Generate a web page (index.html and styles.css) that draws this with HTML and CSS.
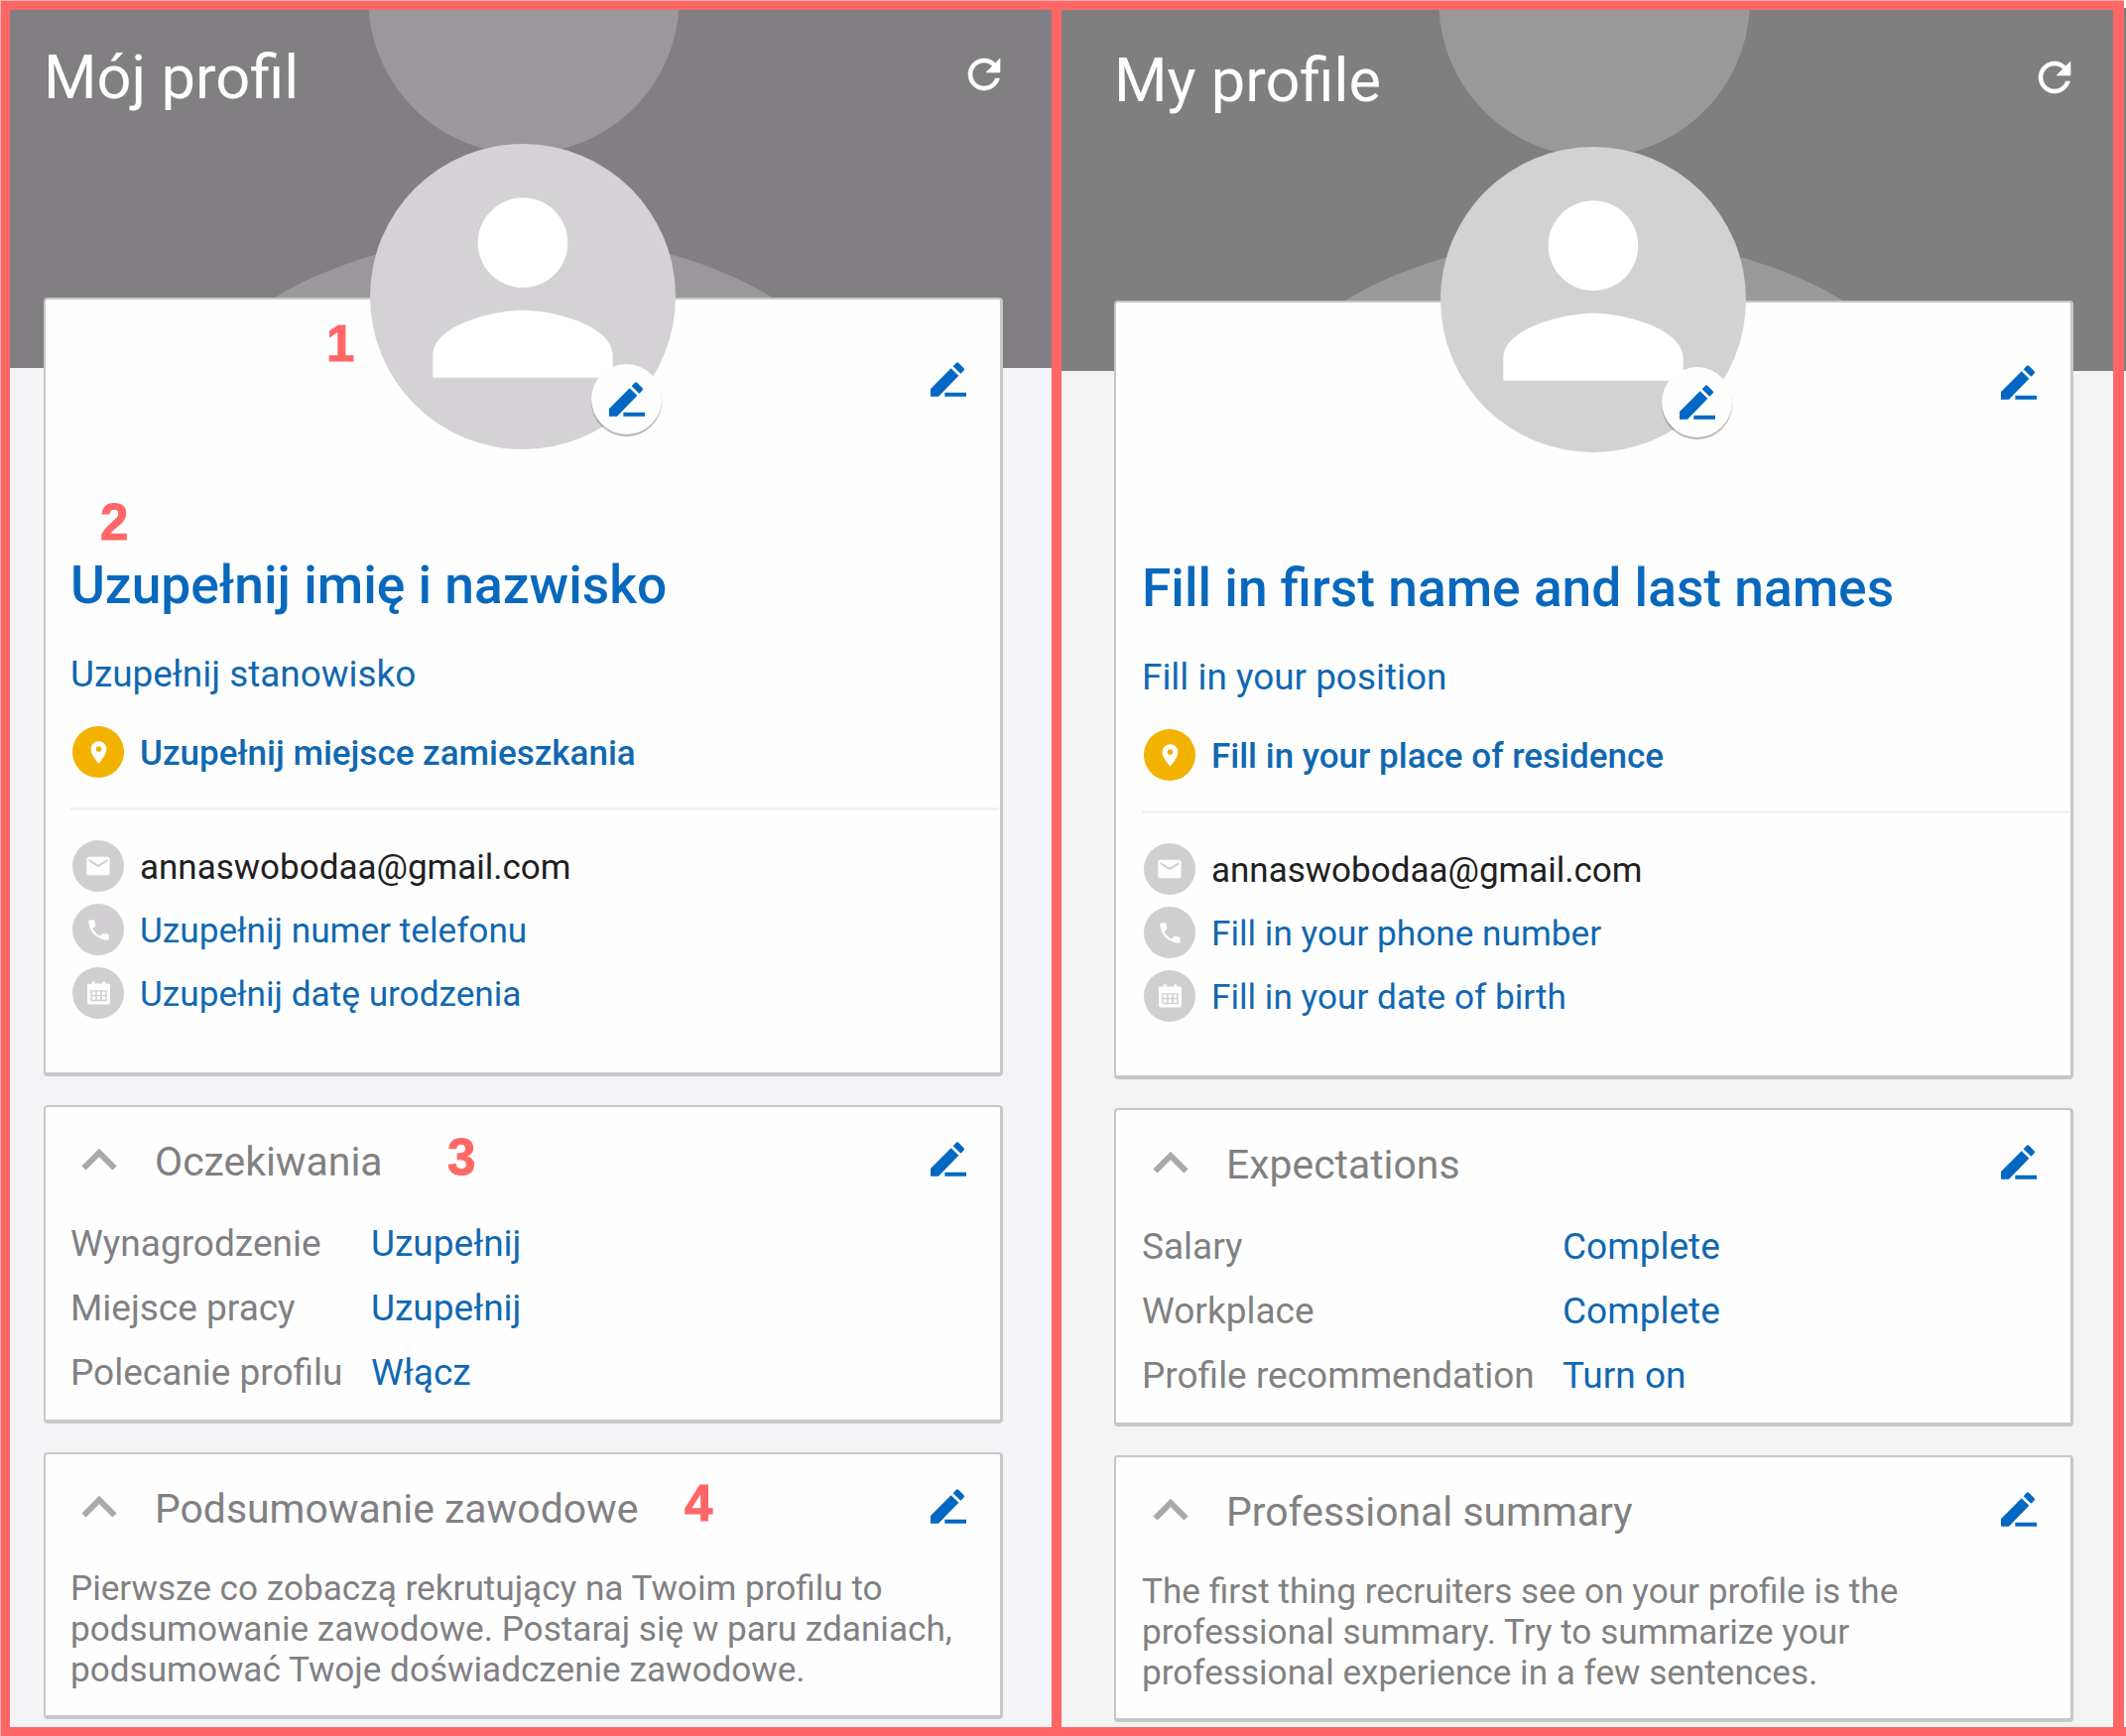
FILE: index.html
```html
<!DOCTYPE html>
<html lang="en">
<head>
<meta charset="utf-8">
<title>Mój profil / My profile</title>
<link rel="stylesheet" href="styles.css">
</head>
<body>
<svg class="defs" aria-hidden="true">
  <symbol id="person" viewBox="0 0 24 24"><path d="M12 12c2.21 0 4-1.79 4-4s-1.79-4-4-4-4 1.79-4 4 1.79 4 4 4zm0 2c-2.67 0-8 1.34-8 4v2h16v-2c0-2.66-5.33-4-8-4z"/></symbol>
  <symbol id="refresh" viewBox="0 0 24 24"><path d="M17.65 6.35C16.2 4.9 14.21 4 12 4c-4.42 0-7.99 3.58-7.99 8s3.57 8 7.99 8c3.73 0 6.84-2.55 7.73-6h-2.08c-.82 2.33-3.04 4-5.65 4-3.31 0-6-2.69-6-6s2.69-6 6-6c1.66 0 3.14.69 4.22 1.78L13 11h7V4l-2.35 2.35z" stroke="currentColor" stroke-width=".3"/></symbol>
  <symbol id="pencil" viewBox="0 0 108 105"><path d="M0 104V81L62 19l23 22-61 63zM68 13l9-10q4-4 8 0l15 15q4 4 0 8l-9 9zM43 92h65v12H43z"/></symbol>
  <symbol id="chevron" viewBox="0 0 36 22"><path d="M2.500 19.500 18 4l15.500 15.500" fill="none" stroke="currentColor" stroke-width="6"/></symbol>
  <symbol id="place" viewBox="0 0 24 24"><path d="M12 2C8.130 2 5 5.130 5 9c0 5.250 7 13 7 13s7-7.750 7-13c0-3.870-3.130-7-7-7zm0 9.500c-1.380 0-2.500-1.120-2.500-2.500s1.120-2.500 2.500-2.500 2.500 1.120 2.500 2.500-1.120 2.500-2.500 2.500z"/></symbol>
  <symbol id="mail" viewBox="0 0 24 24"><path d="M20 4H4c-1.100 0-1.990.9-1.990 2L2 18c0 1.100.9 2 2 2h16c1.100 0 2-.9 2-2V6c0-1.100-.9-2-2-2zm0 4l-8 5-8-5V6l8 5 8-5v2z"/></symbol>
  <symbol id="phone" viewBox="0 0 24 24"><path d="M6.620 10.790c1.440 2.830 3.760 5.140 6.590 6.590l2.200-2.200c.27-.27.67-.36 1.020-.24 1.120.37 2.330.57 3.570.57.55 0 1 .45 1 1V20c0 .55-.45 1-1 1-9.390 0-17-7.610-17-17 0-.55.45-1 1-1h3.500c.55 0 1 .45 1 1 0 1.250.2 2.450.57 3.570.11.35.03.74-.25 1.020l-2.200 2.200z"/></symbol>
  <symbol id="calendar" viewBox="0 0 24 24"><path fill-rule="evenodd" d="M5 0h3v2h8V0h3v2h3q2 0 2 2v18q0 2-2 2H2q-2 0-2-2V4q0-2 2-2h3zM3.500 9v11.500h17V9zM5 10.500h3.500v3.500H5zM10.200 10.500h3.500v3.500h-3.500zM15.500 10.500H19v3.500h-3.500zM5 15.500h3.500V19H5zM10.200 15.500h3.500V19h-3.500zM15.500 15.500H19V19h-3.500z"/></symbol>
</svg>

<main class="board">
  <section class="screen screen-pl" lang="pl">
    <header class="hero">
      <svg class="hero-person"><use href="#person"/></svg>
      <h1 class="hero-title">Mój profil</h1>
      <svg class="refresh"><use href="#refresh"/></svg>
    </header>
    <div class="cards">
      <article class="card profile">
        <div class="profile-top"><svg class="pencil"><use href="#pencil"/></svg></div>
        <div class="avatar">
          <svg class="avatar-person"><use href="#person"/></svg>
          <span class="avatar-edit"><svg class="pencil"><use href="#pencil"/></svg></span>
        </div>
        <h2 class="name">Uzupełnij imię i nazwisko</h2>
        <p class="position">Uzupełnij stanowisko</p>
        <div class="row residence"><span class="dot dot-yellow"><svg class="i-place"><use href="#place"/></svg></span><span class="row-text strong">Uzupełnij miejsce zamieszkania</span></div>
        <hr class="rule">
        <div class="contacts">
          <div class="row"><span class="dot"><svg class="i-mail"><use href="#mail"/></svg></span><span class="row-text dark">annaswobodaa@gmail.com</span></div>
          <div class="row"><span class="dot"><svg class="i-phone"><use href="#phone"/></svg></span><span class="row-text">Uzupełnij numer telefonu</span></div>
          <div class="row"><span class="dot"><svg class="i-cal"><use href="#calendar"/></svg></span><span class="row-text">Uzupełnij datę urodzenia</span></div>
        </div>
      </article>
      <article class="card section">
        <div class="section-head"><svg class="chevron"><use href="#chevron"/></svg><h3 class="section-title">Oczekiwania</h3><svg class="pencil"><use href="#pencil"/></svg></div>
        <dl class="facts">
          <dt>Wynagrodzenie</dt><dd>Uzupełnij</dd>
          <dt>Miejsce pracy</dt><dd>Uzupełnij</dd>
          <dt>Polecanie profilu</dt><dd>Włącz</dd>
        </dl>
      </article>
      <article class="card section">
        <div class="section-head"><svg class="chevron"><use href="#chevron"/></svg><h3 class="section-title">Podsumowanie zawodowe</h3><svg class="pencil"><use href="#pencil"/></svg></div>
        <p class="summary">Pierwsze co zobaczą rekrutujący na Twoim profilu to<br>podsumowanie zawodowe. Postaraj się w paru zdaniach,<br>podsumować Twoje doświadczenie zawodowe.</p>
      </article>
    </div>
    <span class="mark mark-1">1</span>
    <span class="mark mark-2">2</span>
    <span class="mark mark-3">3</span>
    <span class="mark mark-4">4</span>
  </section>

  <section class="screen screen-en">
    <header class="hero">
      <svg class="hero-person"><use href="#person"/></svg>
      <h1 class="hero-title">My profile</h1>
      <svg class="refresh"><use href="#refresh"/></svg>
    </header>
    <div class="cards">
      <article class="card profile">
        <div class="profile-top"><svg class="pencil"><use href="#pencil"/></svg></div>
        <div class="avatar">
          <svg class="avatar-person"><use href="#person"/></svg>
          <span class="avatar-edit"><svg class="pencil"><use href="#pencil"/></svg></span>
        </div>
        <h2 class="name">Fill in first name and last names</h2>
        <p class="position">Fill in your position</p>
        <div class="row residence"><span class="dot dot-yellow"><svg class="i-place"><use href="#place"/></svg></span><span class="row-text strong">Fill in your place of residence</span></div>
        <hr class="rule">
        <div class="contacts">
          <div class="row"><span class="dot"><svg class="i-mail"><use href="#mail"/></svg></span><span class="row-text dark">annaswobodaa@gmail.com</span></div>
          <div class="row"><span class="dot"><svg class="i-phone"><use href="#phone"/></svg></span><span class="row-text">Fill in your phone number</span></div>
          <div class="row"><span class="dot"><svg class="i-cal"><use href="#calendar"/></svg></span><span class="row-text">Fill in your date of birth</span></div>
        </div>
      </article>
      <article class="card section">
        <div class="section-head"><svg class="chevron"><use href="#chevron"/></svg><h3 class="section-title">Expectations</h3><svg class="pencil"><use href="#pencil"/></svg></div>
        <dl class="facts">
          <dt>Salary</dt><dd>Complete</dd>
          <dt>Workplace</dt><dd>Complete</dd>
          <dt>Profile recommendation</dt><dd>Turn on</dd>
        </dl>
      </article>
      <article class="card section">
        <div class="section-head"><svg class="chevron"><use href="#chevron"/></svg><h3 class="section-title">Professional summary</h3><svg class="pencil"><use href="#pencil"/></svg></div>
        <p class="summary">The first thing recruiters see on your profile is the<br>professional summary. Try to summarize your<br>professional experience in a few sentences.</p>
      </article>
    </div>
  </section>
</main>
</body>
</html>
```

FILE: styles.css
```css
* { box-sizing: border-box; margin: 0; padding: 0; }

body {
  width: 2143px;
  height: 1750px;
  overflow: hidden;
  background:
    linear-gradient(#fff 8px, #7f7f7f 8px 374px, #f3f3f3 374px) right top / 2px 1741px no-repeat,
    linear-gradient(#ffb3b3, #ffb3b3) left top / 100% 1px no-repeat,
    linear-gradient(#ffb3b3, #ffb3b3) left top / 1px 100% no-repeat,
    #ff6767;
  font-family: Roboto, "Liberation Sans", sans-serif;
}

svg { display: block; fill: currentColor; flex: none; }
.defs { position: absolute; width: 0; height: 0; }

.board {
  display: grid;
  grid-template-columns: 1050px 1060px;
  gap: 10px;
  height: 1750px;
  padding: 10px 12px 9px 10px;
}

.screen { position: relative; overflow: hidden; background: var(--page); }
.screen-pl {
  --page: #f4f3f6; --hero: #817f82; --shade: #9a989b; --avatar: #d4d2d5;
  --dot: #d0ced1; --edge: #c9c7ca; --muted: #818083;
  --left: 34px; --drop: 0px; --inset: 25px; --values: 303px; --right: 50px;
}
.screen-en {
  --page: #f3f3f3; --hero: #7f7f7f; --shade: #999; --avatar: #d2d2d2;
  --dot: #cfcfcf; --edge: #c6c6c6; --muted: #818181;
  --left: 53px; --drop: 3px; --inset: 26px; --values: 424px; --right: 41px;
}

.hero {
  position: relative;
  display: flex;
  justify-content: space-between;
  height: calc(361px + var(--drop));
  padding: calc(32px + var(--drop)) calc(var(--right) - 6px) 0 var(--left);
  overflow: hidden;
  background: var(--hero);
  color: #fff;
}
.hero-person {
  position: absolute;
  left: calc(var(--left) + 14px);
  top: calc(var(--drop) - 325px);
  width: 940px;
  height: 940px;
  color: var(--shade);
}
.hero-title { position: relative; font-weight: 400; font-size: 61.400px; line-height: 72px; }
.refresh { width: 48px; height: 48px; margin-top: 9px; }

.cards {
  position: relative;
  display: flex;
  flex-direction: column;
  gap: 29px;
  width: 967px;
  margin: -71px 0 0 var(--left);
}
.card {
  background: #fefefe;
  border: 2px solid var(--edge);
  border-right-width: 3px;
  border-bottom-width: 4px;
  border-radius: 4px;
}

.profile { position: relative; padding: 0 0 53px var(--inset); color: #1068b1; }
.profile-top { display: flex; justify-content: flex-end; height: 258px; padding: 63px 34px 0 0; }
.pencil { width: 36px; height: 35px; color: #0068c3; }

.avatar {
  position: absolute;
  left: 327px;
  top: -157px;
  width: 308px;
  height: 308px;
  border-radius: 50%;
  background: var(--avatar);
}
.avatar-person { width: 272px; height: 272px; margin: 9px 18px; color: #fff; }
.avatar-edit {
  position: absolute;
  left: 223px;
  top: 222px;
  display: grid;
  place-items: center;
  width: 71px;
  height: 71px;
  border-radius: 50%;
  background: #fefefe;
  box-shadow: 0 2px 1px rgba(0, 0, 0, .3);
}

.name { font-weight: 500; font-size: 53.300px; line-height: 60px; color: #0868bd; }
.position { margin-top: 38px; font-size: 36.900px; line-height: 44px; }
.residence { margin-top: 30px; }
.row { display: flex; height: 52px; }
.row-text { margin-left: 16px; padding-top: 4px; font-size: 35.200px; line-height: 44px; }
.strong { padding-top: 6px; font-weight: 500; font-size: 35px; }
.dark { padding-top: 5px; font-size: 35px; color: #202022; }
.dot {
  display: grid;
  place-items: center;
  width: 52px;
  height: 52px;
  margin-left: 2px;
  border-radius: 50%;
  background: var(--dot);
  color: #fefefe;
}
.contacts .dot { margin-top: -1px; }
.dot-yellow { background: #f3b200; }
.i-place { width: 27px; height: 27px; }
.i-mail { width: 28px; height: 28px; }
.i-phone { width: 27px; height: 27px; }
.i-cal { width: 23px; height: 24px; }
.rule { height: 3px; margin: 30px 1px 31px 0; border: 0; background: #f2f2f2; }
.contacts { display: flex; flex-direction: column; gap: 12px; }

.section { padding: 31px 34px 15px var(--inset); color: var(--muted); }
.section:last-child { padding-bottom: 25px; }
.section-head { display: flex; align-items: center; height: 48px; }
.section-head .pencil { margin: -5px 0 0 auto; }
.chevron { width: 36px; height: 22px; margin: -4px 0 0 11px; color: #a9a8aa; }
.section-title { margin-left: 38px; font-weight: 400; font-size: 40.900px; line-height: 48px; }
.facts {
  display: grid;
  grid-template-columns: var(--values) 1fr;
  margin-top: 26px;
  font-size: 37px;
  line-height: 65px;
}
.facts dd { color: #1068b1; }
.summary { margin-top: 36px; font-size: 35.150px; line-height: 41px; white-space: nowrap; }

.mark {
  position: absolute;
  font: 700 51px/60px "Liberation Sans", Arial, sans-serif;
  color: #ff6767;
  -webkit-text-stroke: 1px #ff6767;
}
.mark-1 { left: 319px; top: 307px; }
.mark-2 { left: 91px; top: 487px; }
.mark-3 { left: 441px; top: 1127px; }
.mark-4 { left: 680px; top: 1476px; }
```
